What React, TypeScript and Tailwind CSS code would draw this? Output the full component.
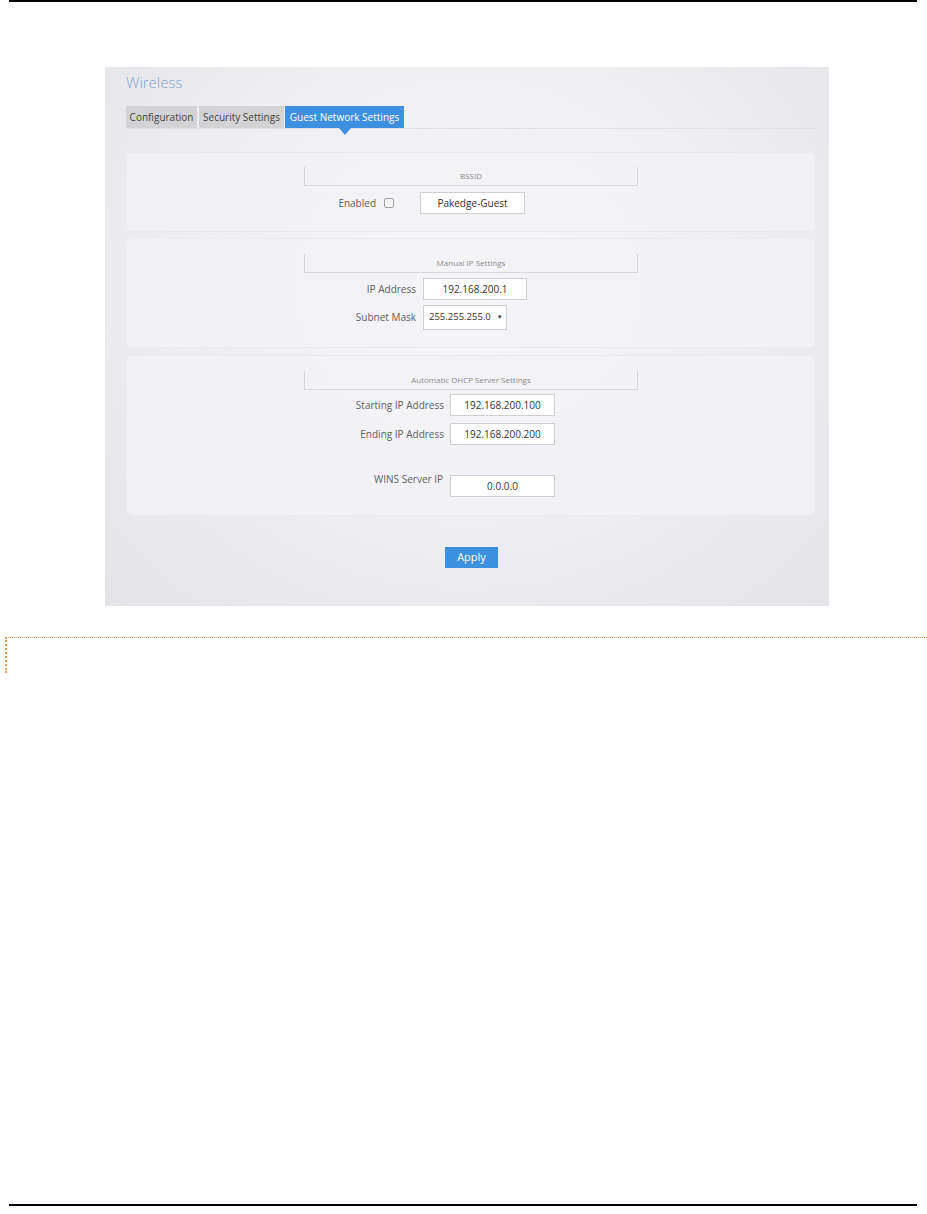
import * as React from "react";

const font = { fontFamily: '"Open Sans", "Noto Sans", sans-serif' };

function Legend({ title }: { title: string }) {
  return (
    <div className="mx-auto flex h-[19px] w-[334px] items-center justify-center border-x border-b border-[#d6d6da] text-[8px] text-[#8a8a8a]">
      {title}
    </div>
  );
}

function Field({ value, w = "w-[105px]" }: { value: string; w?: string }) {
  return (
    <div className={`flex h-[22px] ${w} items-center justify-center border border-[#cfcfd3] bg-white text-[10px] text-[#333]`}>
      {value}
    </div>
  );
}

function Row({ label, labelW, gap, children, className = "" }: { label: string; labelW: string; gap: string; children: React.ReactNode; className?: string }) {
  return (
    <div className={`flex items-center ${className}`}>
      <div className={`${labelW} ${gap} text-right text-[10px] text-[#606060]`}>{label}</div>
      {children}
    </div>
  );
}

export default function App() {
  return (
    <div className="relative h-[1214px] w-[927px] bg-white" style={font}>
      <div className="ml-[9px] h-[2px] w-[908px] bg-black" />

      {/* screenshot panel */}
      <div className="ml-[105px] mt-[65px] h-[539px] w-[724px] bg-[radial-gradient(ellipse_at_50%_40%,#f8f8fa_0%,#eeeef1_55%,#e4e4e8_100%)] pl-[21px] pr-[13px]">
        <div className="pt-[4px] text-[15px] font-light leading-[22px] text-[#7aa6db]">Wireless</div>

        <div className="relative mt-[13px] flex h-[23px] items-stretch border-b border-[#e2e2e6] text-[10px]">
          <div className="flex w-[71px] items-center justify-center bg-[#d3d3d5] text-[#444]">Configuration</div>
          <div className="ml-[2px] flex w-[85px] items-center justify-center bg-[#d3d3d5] text-[#444]">Security Settings</div>
          <div className="relative ml-[1px] flex w-[119px] items-center justify-center bg-[#3d8fdf] text-white">
            Guest Network Settings
            <div className="absolute left-1/2 top-full -ml-[6px] h-0 w-0 border-x-[6px] border-t-[7px] border-x-transparent border-t-[#3d8fdf]" />
          </div>
        </div>

        {/* card 1 */}
        <div className="mt-[23px] h-[80px] rounded-[6px] border border-[#ebebef] bg-[#f3f3f6]/80 pt-[14px]">
          <Legend title="BSSID" />
          <Row label="Enabled" labelW="w-[249px]" gap="mr-[8px]" className="mt-[6px]">
            <div className="mr-[26px] h-[10px] w-[10px] rounded-[2px] border border-[#a0a0a4] bg-[#f4f4f4]" />
            <Field value="Pakedge-Guest" />
          </Row>
        </div>

        {/* card 2 */}
        <div className="mt-[6px] h-[110px] rounded-[6px] border border-[#ebebef] bg-[#f3f3f6]/80 pt-[15px]">
          <Legend title="Manual IP Settings" />
          <Row label="IP Address" labelW="w-[289px]" gap="mr-[7px]" className="mt-[5px]">
            <Field value="192.168.200.1" w="w-[104px]" />
          </Row>
          <Row label="Subnet Mask" labelW="w-[289px]" gap="mr-[7px]" className="mt-[5px]">
            <div className="flex h-[25px] w-[84px] items-center border border-[#cfcfd3] bg-white pl-[5px] text-[9.5px] text-[#333]">
              255.255.255.0
              <span className="ml-[6px] text-[6px]">▼</span>
            </div>
          </Row>
        </div>

        {/* card 3 */}
        <div className="mt-[7px] h-[161px] rounded-[6px] border border-[#ebebef] bg-[#f3f3f6]/80 pt-[15px]">
          <Legend title="Automatic DHCP Server Settings" />
          <Row label="Starting IP Address" labelW="w-[317px]" gap="mr-[6px]" className="mt-[4px]">
            <Field value="192.168.200.100" />
          </Row>
          <Row label="Ending IP Address" labelW="w-[317px]" gap="mr-[6px]" className="mt-[7px]">
            <Field value="192.168.200.200" />
          </Row>
          <div className="mt-[27px] flex items-start">
            <div className="mr-[6px] w-[317px] pr-[1px] text-right text-[10px] leading-[14px] text-[#606060]">WINS Server IP</div>
            <div className="mt-[3px]">
              <Field value="0.0.0.0" />
            </div>
          </div>
        </div>

        <div className="mt-[31px] flex pl-[319px]">
          <div className="flex h-[21px] w-[53px] items-center justify-center bg-[#3d8fdf] text-[11px] text-white">Apply</div>
        </div>
      </div>

      {/* orange dotted frame */}
      <div className="ml-[5px] mt-[31px] h-[36px] border-l-2 border-t border-dotted border-[#e59a55]" />

      <div className="absolute left-[9px] top-[1204px] h-[2px] w-[908px] bg-black" />
    </div>
  );
}
